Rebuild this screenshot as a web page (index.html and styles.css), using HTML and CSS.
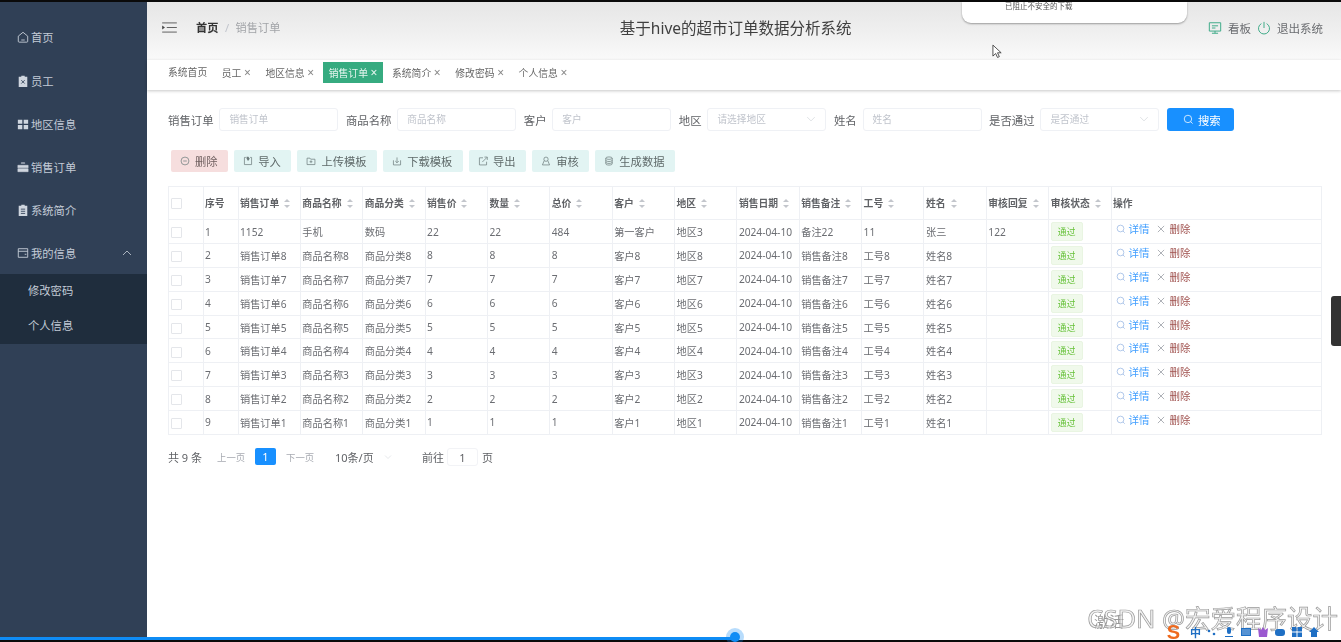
FILE: index.html
```html
<!DOCTYPE html>
<html lang="zh-CN">
<head>
<meta charset="utf-8">
<title>基于hive的超市订单数据分析系统</title>
<link rel="stylesheet" href="styles.css">
</head>
<body>
<svg class="defs" width="0" height="0" aria-hidden="true">
  <symbol id="i-search" viewBox="0 0 16 16"><circle cx="7.2" cy="7.2" r="5.4" fill="none" stroke="currentColor" stroke-width="1.1"/><path d="M11.2 11.2 14 14" stroke="currentColor" stroke-width="1.1" fill="none"/></symbol>
  <symbol id="i-x" viewBox="0 0 16 16"><path d="M3 3l10 10M13 3 3 13" stroke="currentColor" stroke-width="1.1" fill="none"/></symbol>
  <symbol id="i-down" viewBox="0 0 16 16"><path d="M2 5l6 6 6-6" stroke="currentColor" stroke-width="1" fill="none"/></symbol>
</svg>
<div class="app">
  <aside class="sidebar">
    <ul class="menu">
      <li class="menu-item"><svg class="mi" viewBox="0 0 14 14"><path d="M1.5 6 7 1.5 12.5 6v6a1 1 0 0 1-1 1h-9a1 1 0 0 1-1-1z" fill="none" stroke="currentColor"/><path d="M5 10.5h4" stroke="currentColor"/></svg><span>首页</span></li>
      <li class="menu-item"><svg class="mi" viewBox="0 0 14 14"><path d="M2 2h3V1h4v1h3v12H2z" fill="currentColor"/><path d="M5 6l4 4M9 6l-4 4" stroke="#304056" fill="none"/></svg><span>员工</span></li>
      <li class="menu-item"><svg class="mi" viewBox="0 0 14 14"><path d="M1 2h5.2v4.7H1zM7.8 2H13v4.7H7.8zM1 8.3h5.2V13H1zM7.8 8.3H13V13H7.8z" fill="currentColor"/></svg><span>地区信息</span></li>
      <li class="menu-item"><svg class="mi" viewBox="0 0 14 14"><path d="M5 3V2h4v1M1 5h12v3H1zM1 9h12v3.500H1z" fill="currentColor" stroke="currentColor" stroke-width=".6"/></svg><span>销售订单</span></li>
      <li class="menu-item"><svg class="mi" viewBox="0 0 14 14"><path d="M2 2h3V1h4v1h3v12H2z" fill="currentColor"/><path d="M4.500 6h5M4.500 8.500h5M4.500 11h5" stroke="#304056" fill="none"/></svg><span>系统简介</span></li>
      <li class="menu-item"><svg class="mi" viewBox="0 0 14 14"><path d="M1.500 2h11v10h-11zM1.500 5h11M9 8.500h2" fill="none" stroke="currentColor"/></svg><span>我的信息</span><svg class="chev" viewBox="0 0 12 12"><path d="M2 8l4-4 4 4" fill="none" stroke="currentColor"/></svg></li>
    </ul>
    <ul class="submenu">
      <li>修改密码</li>
      <li>个人信息</li>
    </ul>
  </aside>
  <main class="main">
    <header class="topbar">
      <div class="crumbs">
        <svg class="burger" viewBox="0 0 16 12"><path d="M0 1h16M5 6h11M0 11h16" stroke="#555" fill="none"/><path d="M0 3.800 3 6 0 8.200z" fill="#444"/></svg>
        <b>首页</b><i>/</i><span>销售订单</span>
      </div>
      <h1 class="title">基于hive的超市订单数据分析系统</h1>
      <div class="actions">
        <svg class="act" viewBox="0 0 16 16"><path d="M1.500 2h13v9.500h-13zM8 11.500V14M4.500 14h7M4.500 5.500h7M4.500 8h4" fill="none" stroke="#3aa985" stroke-width="1.100"/></svg><span>看板</span>
        <svg class="act act2" viewBox="0 0 16 16"><path d="M5 3a6.300 6.300 0 1 0 6 0M8 1v7" fill="none" stroke="#3aa985" stroke-width="1.100"/></svg><span>退出系统</span>
      </div>
    </header>
    <nav class="tabs">
      <span class="tab">系统首页</span>
      <span class="tab">员工<em>×</em></span>
      <span class="tab">地区信息<em>×</em></span>
      <span class="tab on">销售订单<em>×</em></span>
      <span class="tab">系统简介<em>×</em></span>
      <span class="tab">修改密码<em>×</em></span>
      <span class="tab">个人信息<em>×</em></span>
    </nav>
    <section class="content">
      <form class="filters">
        <label>销售订单</label><div class="field">销售订单</div>
        <label>商品名称</label><div class="field">商品名称</div>
        <label>客户</label><div class="field">客户</div>
        <label>地区</label><div class="field sel">请选择地区<svg><use href="#i-down"/></svg></div>
        <label>姓名</label><div class="field">姓名</div>
        <label>是否通过</label><div class="field sel">是否通过<svg><use href="#i-down"/></svg></div>
        <div class="search"><svg><use href="#i-search"/></svg>搜索</div>
      </form>
      <div class="btns">
        <div class="btn red"><svg viewBox="0 0 14 14"><circle cx="7" cy="7" r="5.500" fill="none" stroke="currentColor"/><path d="M4.500 7h5" stroke="currentColor"/></svg>删除</div>
        <div class="btn"><svg viewBox="0 0 14 14"><path d="M4 2H2v10h10V2h-2" fill="none" stroke="currentColor"/><path d="M5 1h2.500l2 3-2.500 3-2-3z" fill="currentColor"/></svg>导入</div>
        <div class="btn"><svg viewBox="0 0 14 14"><path d="M1.500 3h4l1 1.500h6v7.500h-11z" fill="none" stroke="currentColor"/><path d="M7 6v4M5 8h4" stroke="currentColor"/></svg>上传模板</div>
        <div class="btn"><svg viewBox="0 0 14 14"><path d="M2 6v6.500h10V6M7 2v7M4.500 7 7 9.500 9.500 7" fill="none" stroke="currentColor"/></svg>下载模板</div>
        <div class="btn"><svg viewBox="0 0 14 14"><path d="M7 2.500H2v10h10V8M6 8.500l6.500-6.500M9 1.500h4v4" fill="none" stroke="currentColor"/></svg>导出</div>
        <div class="btn"><svg viewBox="0 0 14 14"><circle cx="7" cy="4.500" r="3" fill="none" stroke="currentColor"/><path d="M4.500 6.500 2 12.500h10L9.500 6.500" fill="none" stroke="currentColor"/></svg>审核</div>
        <div class="btn"><svg viewBox="0 0 14 14"><ellipse cx="7" cy="3" rx="4.500" ry="1.700" fill="none" stroke="currentColor"/><path d="M2.500 3v8c0 1 2 1.700 4.500 1.700s4.500-.7 4.500-1.700V3M2.500 6c0 1 2 1.700 4.500 1.700S11.500 7 11.500 6M2.500 8.700c0 1 2 1.700 4.500 1.700s4.500-.7 4.500-1.700" fill="none" stroke="currentColor"/></svg>生成数据</div>
      </div>
      <table class="grid">
        <colgroup><col class="c-chk"><col class="c-no"><col class="c-w" span="14"><col class="c-op"></colgroup>
        <thead>
          <tr>
            <th><i class="chk"></i></th><th>序号</th>
            <th>销售订单<i class="sort"></i></th><th>商品名称<i class="sort"></i></th><th>商品分类<i class="sort"></i></th><th>销售价<i class="sort"></i></th><th>数量<i class="sort"></i></th><th>总价<i class="sort"></i></th><th>客户<i class="sort"></i></th><th>地区<i class="sort"></i></th><th>销售日期<i class="sort"></i></th><th>销售备注<i class="sort"></i></th><th>工号<i class="sort"></i></th><th>姓名<i class="sort"></i></th><th>审核回复<i class="sort"></i></th><th>审核状态<i class="sort"></i></th><th>操作</th>
          </tr>
        </thead>
        <tbody>
          <tr><td><i class="chk"></i></td><td>1</td><td>1152</td><td>手机</td><td>数码</td><td>22</td><td>22</td><td>484</td><td>第一客户</td><td>地区3</td><td>2024-04-10</td><td>备注22</td><td>11</td><td>张三</td><td>122</td><td><span class="tag">通过</span></td><td class="ops"><svg><use href="#i-search"/></svg><a>详情</a><svg class="del"><use href="#i-x"/></svg><u>删除</u></td></tr>
          <tr><td><i class="chk"></i></td><td>2</td><td>销售订单8</td><td>商品名称8</td><td>商品分类8</td><td>8</td><td>8</td><td>8</td><td>客户8</td><td>地区8</td><td>2024-04-10</td><td>销售备注8</td><td>工号8</td><td>姓名8</td><td></td><td><span class="tag">通过</span></td><td class="ops"><svg><use href="#i-search"/></svg><a>详情</a><svg class="del"><use href="#i-x"/></svg><u>删除</u></td></tr>
          <tr><td><i class="chk"></i></td><td>3</td><td>销售订单7</td><td>商品名称7</td><td>商品分类7</td><td>7</td><td>7</td><td>7</td><td>客户7</td><td>地区7</td><td>2024-04-10</td><td>销售备注7</td><td>工号7</td><td>姓名7</td><td></td><td><span class="tag">通过</span></td><td class="ops"><svg><use href="#i-search"/></svg><a>详情</a><svg class="del"><use href="#i-x"/></svg><u>删除</u></td></tr>
          <tr><td><i class="chk"></i></td><td>4</td><td>销售订单6</td><td>商品名称6</td><td>商品分类6</td><td>6</td><td>6</td><td>6</td><td>客户6</td><td>地区6</td><td>2024-04-10</td><td>销售备注6</td><td>工号6</td><td>姓名6</td><td></td><td><span class="tag">通过</span></td><td class="ops"><svg><use href="#i-search"/></svg><a>详情</a><svg class="del"><use href="#i-x"/></svg><u>删除</u></td></tr>
          <tr><td><i class="chk"></i></td><td>5</td><td>销售订单5</td><td>商品名称5</td><td>商品分类5</td><td>5</td><td>5</td><td>5</td><td>客户5</td><td>地区5</td><td>2024-04-10</td><td>销售备注5</td><td>工号5</td><td>姓名5</td><td></td><td><span class="tag">通过</span></td><td class="ops"><svg><use href="#i-search"/></svg><a>详情</a><svg class="del"><use href="#i-x"/></svg><u>删除</u></td></tr>
          <tr><td><i class="chk"></i></td><td>6</td><td>销售订单4</td><td>商品名称4</td><td>商品分类4</td><td>4</td><td>4</td><td>4</td><td>客户4</td><td>地区4</td><td>2024-04-10</td><td>销售备注4</td><td>工号4</td><td>姓名4</td><td></td><td><span class="tag">通过</span></td><td class="ops"><svg><use href="#i-search"/></svg><a>详情</a><svg class="del"><use href="#i-x"/></svg><u>删除</u></td></tr>
          <tr><td><i class="chk"></i></td><td>7</td><td>销售订单3</td><td>商品名称3</td><td>商品分类3</td><td>3</td><td>3</td><td>3</td><td>客户3</td><td>地区3</td><td>2024-04-10</td><td>销售备注3</td><td>工号3</td><td>姓名3</td><td></td><td><span class="tag">通过</span></td><td class="ops"><svg><use href="#i-search"/></svg><a>详情</a><svg class="del"><use href="#i-x"/></svg><u>删除</u></td></tr>
          <tr><td><i class="chk"></i></td><td>8</td><td>销售订单2</td><td>商品名称2</td><td>商品分类2</td><td>2</td><td>2</td><td>2</td><td>客户2</td><td>地区2</td><td>2024-04-10</td><td>销售备注2</td><td>工号2</td><td>姓名2</td><td></td><td><span class="tag">通过</span></td><td class="ops"><svg><use href="#i-search"/></svg><a>详情</a><svg class="del"><use href="#i-x"/></svg><u>删除</u></td></tr>
          <tr><td><i class="chk"></i></td><td>9</td><td>销售订单1</td><td>商品名称1</td><td>商品分类1</td><td>1</td><td>1</td><td>1</td><td>客户1</td><td>地区1</td><td>2024-04-10</td><td>销售备注1</td><td>工号1</td><td>姓名1</td><td></td><td><span class="tag">通过</span></td><td class="ops"><svg><use href="#i-search"/></svg><a>详情</a><svg class="del"><use href="#i-x"/></svg><u>删除</u></td></tr>
        </tbody>
      </table>
      <div class="pager">
        <span class="total">共 9 条</span>
        <span class="nav">上一页</span><span class="page">1</span><span class="nav">下一页</span>
        <span class="size">10条/页<svg><use href="#i-down"/></svg></span>
        <span class="goto">前往</span><span class="jump">1</span><span>页</span>
      </div>
    </section>
  </main>
</div>

<div class="popup">已阻止不安全的下载</div>
<svg class="cursor" viewBox="0 0 12 16"><path d="M1 1v12l3-2.800 2 4.300 2-.9-2-4.200h4z" fill="#fff" stroke="#333" stroke-width=".9"/></svg>
<div class="sidetab"></div>
<div class="overlay">
  <span class="activate">激活</span>
  <span class="mark">CSDN @宏爱程序设计</span>
  <span class="ime">
    <b class="sogou">S</b><span class="zh">中</span>
    <svg viewBox="0 0 12 12"><circle cx="3" cy="5" r="1.300"/><circle cx="8" cy="8" r="1.300"/></svg>
    <svg viewBox="0 0 12 12"><rect x="4" y="1" width="4" height="7" rx="2"/><path d="M2 10h8v1H2z"/></svg>
    <svg viewBox="0 0 12 12"><path d="M1 2h10v8H1z"/><path d="M2.500 4h7M2.500 6h7M2.500 8h7" stroke="#fff" stroke-dasharray="1 1"/></svg>
    <svg class="heart" viewBox="0 0 12 12"><path d="M1 2l3 2 2-3 2 3 3-2-1 9H2z"/></svg>
    <svg viewBox="0 0 12 12"><rect x="1" y="3" width="10" height="7" rx="3"/></svg>
    <svg viewBox="0 0 12 12"><path d="M1 1h4.500v4.500H1zM6.500 1H11v4.500H6.500zM1 6.500h4.500V11H1zM6.500 6.500H11V11H6.500z"/></svg>
    <svg viewBox="0 0 12 12"><path d="M6 1l5 5H9v5H3V6H1z"/></svg>
  </span>
</div>
<div class="progress"><i class="fill"></i><i class="knob"></i></div>
</body>
</html>
```
FILE: styles.css
```css
* { box-sizing: border-box; }
html, body { margin: 0; height: 100%; overflow: hidden; }
body {
  background: #fff;
  font-family: "Noto Sans", "Noto Sans CJK SC", sans-serif;
  color: #606266;
  border-top: 2px solid #0a0a0a;
}
.defs { position: absolute; }
ul { list-style: none; margin: 0; padding: 0; }

.app { display: flex; height: 640px; filter: blur(.35px); }

/* Sidebar */
.sidebar { width: 147px; flex: none; background: #304056; padding-top: 13.900px; color: #c3cbd6; font-size: 11.300px; }
.menu-item { height: 43.100px; display: flex; align-items: center; padding-left: 17px; gap: 1px; position: relative; }
.mi { width: 12px; height: 12px; margin-right: 1px; color: #cfd6df; }
.chev { width: 12px; height: 12px; margin-left: auto; margin-right: 14px; color: #aab3bf; }
.submenu { background: #1f2d3d; }
.submenu li { height: 35px; line-height: 33px; padding-left: 28px; }

/* Main column */
.main { flex: 1; min-width: 0; display: flex; flex-direction: column; }
.topbar {
  height: 58px; flex: none; display: flex; align-items: center; justify-content: space-between;
  padding: 0 18px 8px 15px;
  background: linear-gradient(#e6e6e6, #f0f0f0 55%, #fafafa 100%);
}
.crumbs { display: flex; align-items: center; font-size: 11.200px; color: #a2a4a8; }
.crumbs b { color: #333; font-weight: 700; }
.crumbs i { margin: 0 6.500px; font-style: normal; color: #c0c4cc; }
.burger { width: 15px; height: 11px; margin-right: 19px; }
.title { margin: 0 17px 0 0; font-size: 15.500px; font-weight: 400; color: #3f3f3f; }
.actions { display: flex; align-items: center; font-size: 11.500px; color: #6a6c70; margin-top: 2px; }
.act { width: 14px; height: 14px; margin-right: 6px; }
.act2 { margin-left: 6px; }

.tabs {
  height: 30px; flex: none; display: flex; align-items: flex-start; gap: 2.600px; padding: 2px 0 0 15px;
  background: #fff; box-shadow: 0 1px 3px rgba(0,0,0,.22); position: relative;
  font-size: 9.800px; color: #666;
}
.tab { height: 21px; line-height: 21px; padding: 0 6px; white-space: nowrap; }
.tab em { display: inline-block; width: 9.500px; text-align: right; font-style: normal; color: #888; font-size: 12px; }
.tab.on { background: #36ab80; color: #e8f6f0; }
.tab.on em { color: #e8f6f0; }

.content { flex: 1; padding: 18px 19px 0 21px; background: #fff; }

/* Filters */
.filters { display: flex; align-items: center; height: 23px; font-size: 11.400px; color: #606266; }
.filters label { margin-right: 5.800px; white-space: nowrap; }
.field {
  width: 119px; height: 23px; margin-right: 7.500px; padding-left: 9px; position: relative;
  border: 1px solid #eff1f5; border-radius: 3px; line-height: 21px; font-size: 9.700px; color: #c0c4cc;
}
.field.sel svg { position: absolute; right: 9px; top: 5px; width: 10px; height: 10px; color: #ccd0d6; }
.search {
  width: 67px; height: 23px; padding-left: 16px; background: #1890ff; color: #fff; border-radius: 3px;
  display: flex; align-items: center; gap: 4px;
}
.search svg { width: 11px; height: 11px; }

/* Toolbar */
.btns { display: flex; gap: 6.400px; margin: 19px 0 14px 3px; }
.btn {
  height: 22px; padding: 0 10.200px 0 9px; display: flex; align-items: center; gap: 5px;
  background: #e2f4f3; border-radius: 2px; font-size: 11.300px; color: #5f6a6a; white-space: nowrap;
}
.btn svg { width: 10px; height: 10px; color: #6b7a7a; }
.btn.red { background: #f6dede; color: #6f5f5f; }

/* Table */
.grid { width: 1154px; table-layout: fixed; border-collapse: collapse; font-size: 10.200px; }
.c-chk { width: 34.500px; }
.c-no { width: 35px; }
.c-w { width: 62.360px; }
.grid th, .grid td { border: 1px solid #eef0f4; padding: 0 0 0 1.500px; text-align: left; white-space: nowrap; overflow: hidden; }
.grid th { height: 33px; font-size: 9.800px; font-weight: 700; color: #606266; }
.grid td { height: 23.870px; color: #6b6d72; }
.grid tbody tr:first-child td { height: 24px; }
.chk { display: inline-block; width: 11px; height: 11px; border: 1px solid #e4e6ea; border-radius: 1px; vertical-align: middle; }
.sort { display: inline-block; width: 7px; height: 9px; margin-left: 5px; position: relative; vertical-align: -1px; }
.sort::before, .sort::after { content: ""; position: absolute; left: 0; border-left: 3px solid transparent; border-right: 3px solid transparent; }
.sort::before { top: 0; border-bottom: 3.500px solid #c3c6cc; }
.sort::after { bottom: 0; border-top: 3.500px solid #c3c6cc; }
.tag {
  display: block; width: 32px; height: 19px; line-height: 19px; text-align: center; font-size: 8.800px;
  color: #67c23a; background: #f0f9eb; border: 1px solid #e9f5e2; border-radius: 2px;
}
.grid .ops { font-size: 10.500px; padding: 1px 0 0 4px; vertical-align: top; line-height: 16px; }
.ops svg { width: 10px; height: 10px; vertical-align: -1px; color: #8fb0e0; margin-right: 3px; }
.ops a { color: #409eff; }
.ops .del { color: #8a8f98; margin: 0 4px 0 6px; }
.ops u { color: #a0524f; text-decoration: none; }

/* Pagination */
.pager { display: flex; align-items: center; height: 18px; margin-top: 13px; font-size: 11px; color: #606266; }
.total { margin-right: 15px; }
.nav { font-size: 9.400px; color: #a8abb2; width: 28px; white-space: nowrap; }
.page { width: 21px; height: 17px; margin: 0 10px; background: #1890ff; color: #fff; border-radius: 2px; text-align: center; line-height: 17px; }
.size { margin-left: 21px; width: 87px; display: flex; align-items: center; }
.size svg { width: 8px; height: 8px; margin-left: 10px; color: #ccd0d6; }
.jump { width: 31px; height: 18px; margin: 0 4px 0 3px; text-align: center; line-height: 18px; border: 1px solid #f2f3f6; border-radius: 3px; }

/* Overlays: things lying over the recorded page */
.popup {
  position: absolute; left: 962px; top: 2px; width: 225px; height: 21px; padding: 0 0 0 43px;
  background: #fff; border-radius: 0 0 9px 9px; box-shadow: 0 1px 2px rgba(0,0,0,.35);
  font-size: 7.500px; line-height: 9px; color: #555;
}
.cursor { position: absolute; left: 992px; top: 44px; width: 11px; height: 15px; }
.sidetab { position: absolute; left: 1331px; top: 296px; width: 10px; height: 50px; background: #333; border-radius: 3px 0 0 3px; }
.overlay { position: absolute; left: 0; top: 0; width: 1341px; height: 642px; pointer-events: none; }
.activate { position: absolute; left: 1094px; top: 610px; font-size: 15px; color: #999; }
.mark {
  position: absolute; right: 3px; top: 600px; font-size: 25.500px; line-height: 36px; white-space: nowrap;
  color: rgba(235,235,235,.6); -webkit-text-stroke: .7px #999;
}
.ime { position: absolute; left: 1163px; top: 624px; height: 16px; display: flex; align-items: center; gap: 5px; color: #1f6fc4; }
.ime svg { width: 12px; height: 12px; fill: #1f6fc4; }
.ime .heart { fill: #9b59d0; }
.sogou { width: 21px; margin-right: 1px; color: #ee6a1f; font-size: 20px; line-height: 16px; text-align: center; font-family: "Liberation Sans", sans-serif; }
.zh { font-size: 11px; font-weight: 700; }
.progress { position: absolute; left: 0; top: 640px; width: 1341px; height: 2px; background: #0a0a0a; }
.fill { position: absolute; left: 0; top: -3px; width: 735px; height: 3px; background: #0f8cf5; }
.knob { position: absolute; left: 730px; top: -8px; width: 10px; height: 10px; border-radius: 50%; background: #0f8cf5; box-shadow: 0 0 0 4px rgba(15,140,245,.3); }
```
